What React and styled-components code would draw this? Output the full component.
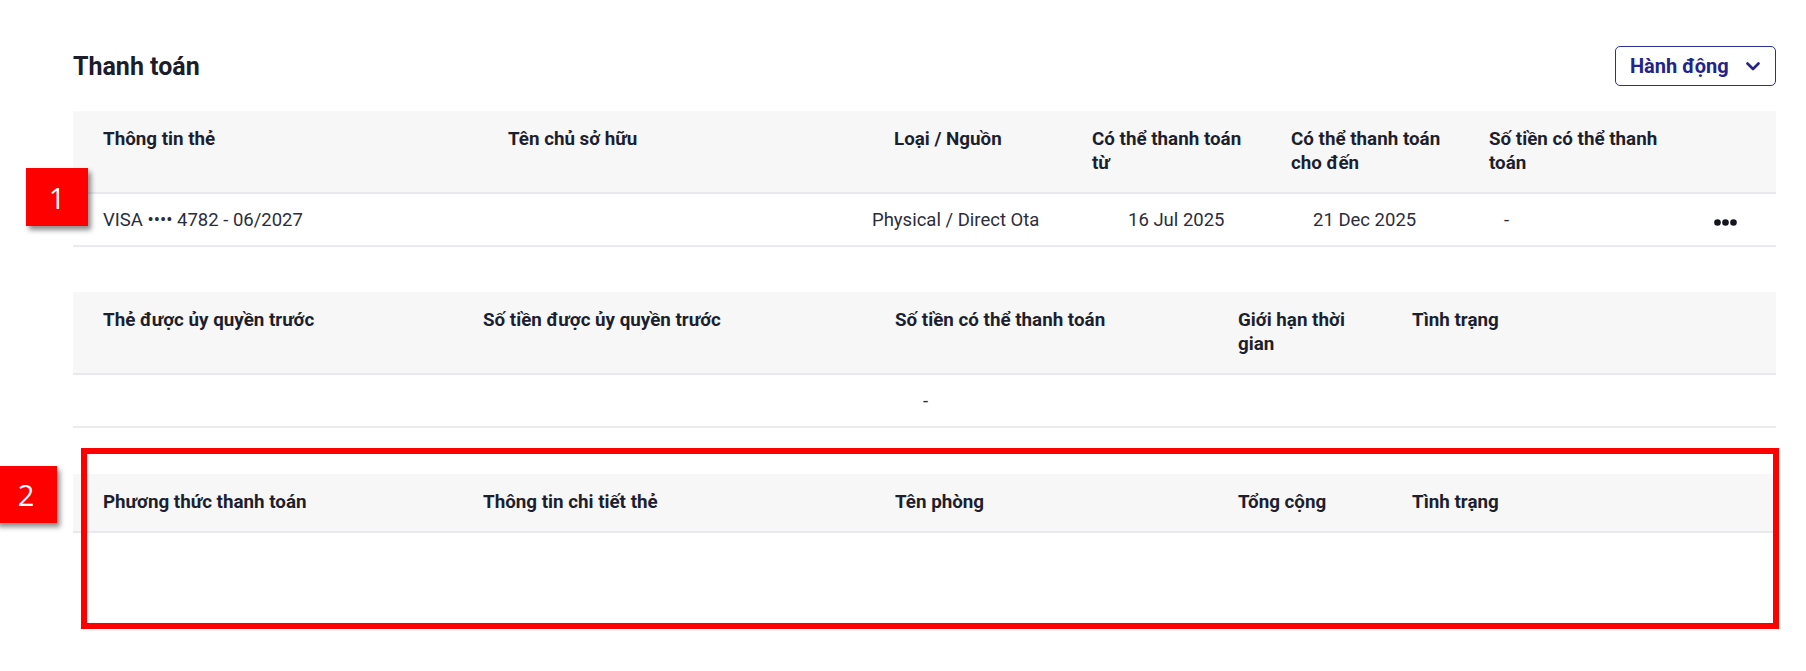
import styled, { createGlobalStyle } from 'styled-components';

const GlobalStyle = createGlobalStyle`
  body {
    margin: 0;
    background: #ffffff;
    font-family: Roboto, 'Noto Sans', sans-serif;
    color: #1c1e2c;
  }
`;

const cardColumns = '405px 386px 198px 199px 198px 231px 1fr';
const authColumns = '380px 412px 343px 174px 1fr';

const Page = styled.div`
  position: relative;
  box-sizing: border-box;
  min-height: 671px;
  padding: 46px 30px 40px 73px;
`;

const TitleRow = styled.div`
  display: flex;
  align-items: center;
  justify-content: space-between;
  height: 40px;
  margin-bottom: 25px;
`;

const Title = styled.h2`
  margin: 0;
  font-size: 25px;
  font-weight: 700;
  color: #1b1d2b;
`;

const ActionButton = styled.button`
  display: flex;
  align-items: center;
  justify-content: space-between;
  box-sizing: border-box;
  width: 161px;
  height: 40px;
  padding: 0 15px 0 14px;
  border: 1.5px solid #2d2f9b;
  border-radius: 5px;
  background: #ffffff;
  color: #23238e;
  font-family: Roboto, sans-serif;
  font-size: 20px;
  font-weight: 700;
  white-space: nowrap;
  cursor: pointer;
`;

const Table = styled.div`
  margin-top: ${(p) => p.$gap || 0}px;
`;

const HeadRow = styled.div`
  display: grid;
  grid-template-columns: ${(p) => p.$cols};
  background: #f7f7f7;
  border-bottom: 2px solid #e7e9ee;
`;

const HeadCell = styled.div`
  padding: 16px ${(p) => p.$pr || 16}px 17px 30px;
  font-size: 18.8px;
  line-height: 24px;
  font-weight: 700;
  color: #1d1f2e;
`;

const BodyRow = styled.div`
  display: grid;
  grid-template-columns: ${(p) => p.$cols};
  align-items: center;
  height: 51px;
  border-bottom: 2px solid #e9ebf0;
`;

const EmptyBody = styled.div`
  height: 80px;
`;

const Cell = styled.div`
  padding-left: ${(p) => p.$pl || 0}px;
  font-size: 18.5px;
  color: #2c2d3a;
  white-space: nowrap;
`;

const Badge = styled.div`
  position: absolute;
  left: ${(p) => p.$left}px;
  top: ${(p) => p.$top}px;
  width: 62px;
  height: ${(p) => p.$h}px;
  display: flex;
  align-items: center;
  justify-content: center;
  background: #ff0000;
  color: #ffffff;
  font-family: 'Open Sans', sans-serif;
  font-size: 29px;
  box-shadow: 3px 4px 5px rgba(0, 0, 0, 0.45);
`;

const Highlight = styled.div`
  position: absolute;
  left: 81px;
  top: 448px;
  width: 1698px;
  height: 181px;
  box-sizing: border-box;
  border: 6px solid #ff0000;
  pointer-events: none;
`;

const Chevron = () => (
  <svg width="14" height="9" viewBox="0 0 14 9">
    <polyline points="1.5,1.5 7,7 12.5,1.5" fill="none" stroke="#23238e" strokeWidth="2.6" strokeLinecap="round" strokeLinejoin="round" />
  </svg>
);

const MoreDots = () => (
  <svg width="23" height="7" viewBox="0 0 23 7">
    <circle cx="3.5" cy="3.5" r="3.3" fill="#14151f" />
    <circle cx="11.5" cy="3.5" r="3.3" fill="#14151f" />
    <circle cx="19.5" cy="3.5" r="3.3" fill="#14151f" />
  </svg>
);

const App = () => {
  return (
    <Page>
      <GlobalStyle />
      <TitleRow>
        <Title>Thanh toán</Title>
        <ActionButton>
          Hành động
          <Chevron />
        </ActionButton>
      </TitleRow>

      <Table>
        <HeadRow $cols={cardColumns}>
          <HeadCell>Thông tin thẻ</HeadCell>
          <HeadCell>Tên chủ sở hữu</HeadCell>
          <HeadCell>Loại / Nguồn</HeadCell>
          <HeadCell $pr={9}>Có thể thanh toán từ</HeadCell>
          <HeadCell $pr={8}>Có thể thanh toán cho đến</HeadCell>
          <HeadCell $pr={21}>Số tiền có thể thanh toán</HeadCell>
          <HeadCell />
        </HeadRow>
        <BodyRow $cols={cardColumns}>
          <Cell $pl={30}>VISA •••• 4782 - 06/2027</Cell>
          <Cell />
          <Cell $pl={8}>Physical / Direct Ota</Cell>
          <Cell $pl={66}>16 Jul 2025</Cell>
          <Cell $pl={52}>21 Dec 2025</Cell>
          <Cell $pl={45}>-</Cell>
          <Cell $pl={24}>
            <MoreDots />
          </Cell>
        </BodyRow>
      </Table>

      <Table $gap={45}>
        <HeadRow $cols={authColumns}>
          <HeadCell>Thẻ được ủy quyền trước</HeadCell>
          <HeadCell>Số tiền được ủy quyền trước</HeadCell>
          <HeadCell>Số tiền có thể thanh toán</HeadCell>
          <HeadCell $pr={30}>Giới hạn thời gian</HeadCell>
          <HeadCell>Tình trạng</HeadCell>
        </HeadRow>
        <BodyRow $cols={authColumns}>
          <Cell />
          <Cell />
          <Cell $pl={58}>-</Cell>
          <Cell />
          <Cell />
        </BodyRow>
      </Table>

      <Table $gap={46}>
        <HeadRow $cols={authColumns}>
          <HeadCell>Phương thức thanh toán</HeadCell>
          <HeadCell>Thông tin chi tiết thẻ</HeadCell>
          <HeadCell>Tên phòng</HeadCell>
          <HeadCell $pr={30}>Tổng cộng</HeadCell>
          <HeadCell>Tình trạng</HeadCell>
        </HeadRow>
        <EmptyBody />
      </Table>

      <Highlight />
      <Badge $left={26} $top={168} $h={58}>1</Badge>
      <Badge $left={-5} $top={466} $h={57}>2</Badge>
    </Page>
  );
};

export default App;
